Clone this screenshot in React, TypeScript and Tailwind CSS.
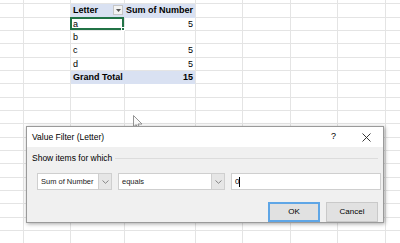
import React from 'react';

const colWidths = [24, 47, 54, 71, 47, 48, 47, 48, 48];
const rowHeights = [4, 14, 13, 13, 14, 13, 13, 14, 13, 13, 14, 13, 13, 14, 13, 13, 14, 13, 13];

const sheetFont = { fontFamily: '"Liberation Sans", Arial, sans-serif' };
const uiFont = { fontFamily: '"Liberation Sans", Arial, sans-serif' };

type Cell = { text?: string; bold?: boolean; right?: boolean; blue?: boolean; filter?: boolean; selected?: boolean };

// pivot lives in rows 1..6, cols 2..3
const pivot: Record<number, [Cell, Cell]> = {
  1: [{ text: 'Letter', bold: true, blue: true, filter: true }, { text: 'Sum of Number', bold: true, blue: true, right: true }],
  2: [{ text: 'a', selected: true }, { text: '5', right: true }],
  3: [{ text: 'b' }, {}],
  4: [{ text: 'c' }, { text: '5', right: true }],
  5: [{ text: 'd' }, { text: '5', right: true }],
  6: [{ text: 'Grand Total', bold: true, blue: true }, { text: '15', bold: true, blue: true, right: true }],
};

const Chevron = () => (
  <svg width="7" height="4" viewBox="0 0 7 4">
    <path d="M0.5 0.5 L3.5 3.3 L6.5 0.5" fill="none" stroke="#7a7a7a" strokeWidth="0.9" />
  </svg>
);

function Sheet() {
  return (
    <div className="flex flex-col bg-white" style={sheetFont}>
      {rowHeights.map((h, r) => (
        <div key={r} className="flex shrink-0" style={{ height: h }}>
          {colWidths.map((w, c) => {
            const cell = pivot[r] && (c === 2 || c === 3) ? pivot[r][c - 2] : undefined;
            const isPivotLeft = cell && c === 2 && cell.blue;
            return (
              <div
                key={c}
                className={`relative shrink-0 border-b border-r flex items-center overflow-visible whitespace-nowrap text-[9px] leading-none text-black ${
                  cell?.blue ? 'bg-[#d9e1f2] border-b-[#d9e1f2]' : 'border-b-[#e4e4e4]'
                } ${isPivotLeft ? 'border-r-[#d9e1f2]' : 'border-r-[#e4e4e4]'} ${
                  cell?.right ? 'justify-end pr-[2px]' : 'pl-[2px]'
                } ${cell?.bold ? 'font-bold' : ''}`}
                style={{ width: w }}
              >
                {cell?.text}
                {cell?.filter && (
                  <span className="absolute right-[1px] top-[1px] w-[10px] h-[10px] border border-[#c6c6c6] bg-[#f3f3f3] flex items-center justify-center">
                    <svg width="5" height="3" viewBox="0 0 5 3">
                      <path d="M0 0 H5 L2.5 3 Z" fill="#555" />
                    </svg>
                  </span>
                )}
                {cell?.selected && (
                  <span className="absolute -left-[1px] -top-[1px] right-0 bottom-0 border-2 border-[#217346]">
                    <span className="absolute -right-[3px] -bottom-[3px] w-[4px] h-[4px] bg-[#217346] border border-white" />
                  </span>
                )}
              </div>
            );
          })}
        </div>
      ))}
    </div>
  );
}

function Combo({ width, label }: { width: number; label: string }) {
  return (
    <div className="flex h-[17px] border border-[#cfcfcf] bg-white" style={{ width }}>
      <div className="flex-1 flex items-center pl-[3px] text-[7.5px] text-[#222] whitespace-nowrap overflow-hidden">{label}</div>
      <div className="w-[13px] border-l border-[#cfcfcf] bg-[#e6e6e6] flex items-center justify-center">
        <Chevron />
      </div>
    </div>
  );
}

function Dialog() {
  return (
    <div
      className="absolute left-[26px] top-[126px] w-[358px] h-[97px] border border-[#9a9a9a] bg-[#f0f0f0] shadow-[1px_1px_4px_rgba(0,0,0,0.35)] flex flex-col"
      style={uiFont}
    >
      <div className="h-[21px] bg-white flex items-center pl-[5px] pr-[10px] text-[8.5px] text-black whitespace-nowrap">
        <span>Value Filter (Letter)</span>
        <span className="ml-auto mr-[26px] text-[9px]">?</span>
        <svg width="9" height="9" viewBox="0 0 9 9" className="mr-[2px]">
          <path d="M0.5 0.5 L8.5 8.5 M8.5 0.5 L0.5 8.5" stroke="#222" strokeWidth="0.9" />
        </svg>
      </div>
      <div className="flex items-center pl-[5px] pr-[5px] mt-[6px] h-[10px] gap-[3px]">
        <span className="text-[8.5px] text-black whitespace-nowrap">Show items for which</span>
        <div className="flex-1 h-px bg-[#dcdcdc]" />
      </div>
      <div className="flex items-center pl-[10px] mt-[10px] gap-[6px]">
        <Combo width={75} label="Sum of Number" />
        <Combo width={107} label="equals" />
        <div className="w-[150px] h-[17px] border border-[#cfcfcf] bg-white flex items-center pl-[3px] text-[8px] text-black">
          0<span className="w-px h-[10px] bg-black" />
        </div>
      </div>
      <div className="flex justify-end gap-[6px] pr-[5px] mt-[12px]">
        <div className="w-[52px] h-[20px] bg-[#e1e1e1] border-2 border-[#5fa6e6] flex items-center justify-center text-[8px] text-black">
          OK
        </div>
        <div className="w-[52px] h-[20px] bg-[#e1e1e1] border border-[#c9c9c9] flex items-center justify-center text-[8px] text-black">
          Cancel
        </div>
      </div>
    </div>
  );
}

function Cursor() {
  return (
    <svg className="absolute left-[133px] top-[115px]" width="11" height="16" viewBox="0 0 11 16">
      <path
        d="M0.5 0.5 L0.5 12 L3.2 9.6 L5.2 14.5 L7 13.7 L5 9 L9 9 Z"
        fill="#fafafa"
        stroke="#8a8a8a"
        strokeWidth="0.9"
        strokeLinejoin="round"
      />
    </svg>
  );
}

export default function App() {
  return (
    <div className="relative w-[400px] h-[243px] overflow-hidden bg-white">
      <Sheet />
      <Cursor />
      <Dialog />
    </div>
  );
}
